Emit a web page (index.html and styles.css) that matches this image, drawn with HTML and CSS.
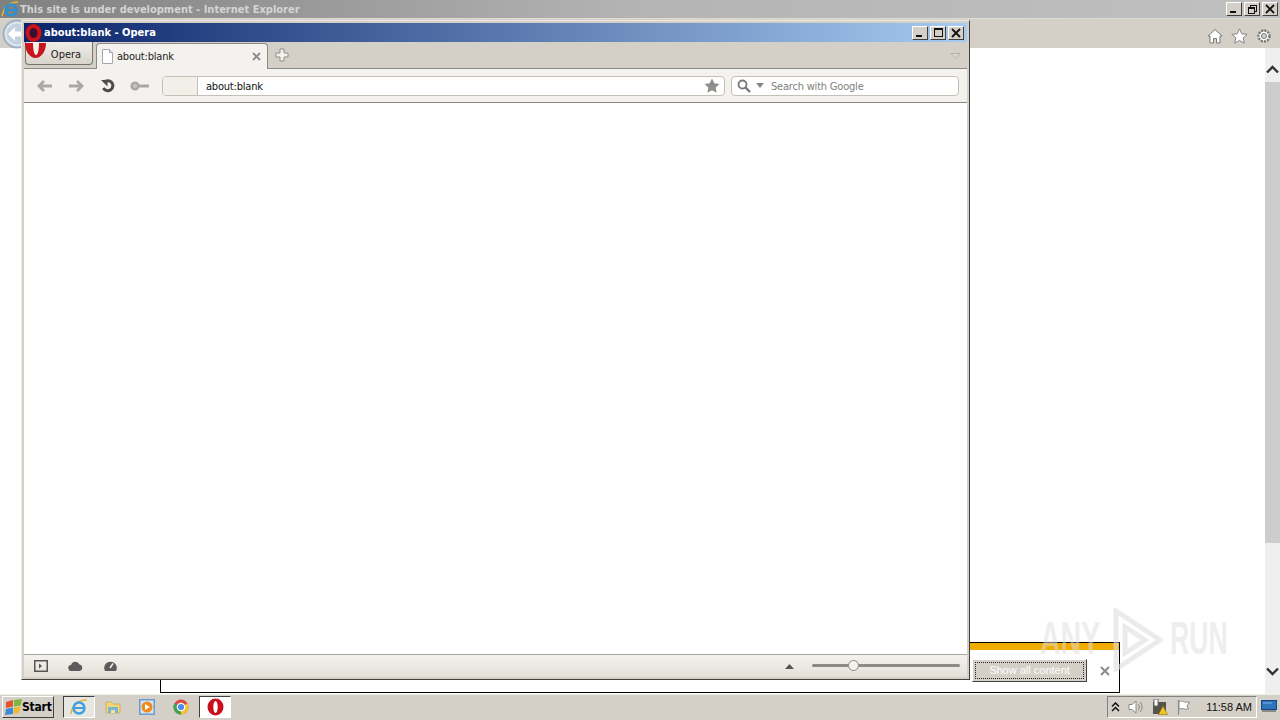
FILE: index.html
```html
<!DOCTYPE html>
<html lang="en">
<head>
    <meta charset="UTF-8">
    <title>about:blank - Opera</title>
    <link rel="stylesheet" href="styles.css">
</head>
<body>
<div class="desktop">
    <!-- IE window behind -->
    <div class="ie-window">
        <div class="ie-title">
            <svg class="ie-logo" width="18" height="17" viewBox="0 0 18 17"><path d="M1 15C3 6 9 1 17 1" fill="none" stroke="#e8b820" stroke-width="1.500"/><ellipse cx="10" cy="9" rx="5.500" ry="5.500" fill="none" stroke="#2b8fd8" stroke-width="2.400"/><path d="M5 9h10" stroke="#2b8fd8" stroke-width="2"/></svg>
            <span class="ie-title-text">This site is under development - Internet Explorer</span>
            <div class="win-btns ie-btns">
                <span class="win-btn"><i class="glyph-min"></i></span>
                <span class="win-btn"><i class="glyph-restore"></i></span>
                <span class="win-btn"><svg width="10" height="10" viewBox="0 0 10 10"><path d="M1 1l8 8M9 1l-8 8" stroke="#111" stroke-width="1.800"/></svg></span>
            </div>
        </div>
        <div class="ie-toolbar">
            <svg class="ie-back" width="30" height="30" viewBox="0 0 30 30"><circle cx="15" cy="15" r="13.500" fill="#dfe7ef" stroke="#9fb0c2" stroke-width="2"/><circle cx="15" cy="15" r="10.500" fill="#c4d2e0"/><path d="M6 15l7-7v4.500h9v5h-9V22z" fill="#fff"/></svg>
            <div class="ie-tools">
                <svg width="16" height="16" viewBox="0 0 16 16"><path d="M1 8l7-6.500L15 8h-2v7H9.500v-4.500h-3V15H3V8z" fill="#fff" stroke="#77787a"/></svg>
                <svg width="17" height="16" viewBox="0 0 17 16"><path d="M8.500 .8l2.300 5 5.400.5-4.100 3.600 1.200 5.300-4.800-2.800-4.800 2.800 1.200-5.300L.8 6.300l5.400-.5z" fill="#fff" stroke="#85868a"/></svg>
                <svg width="16" height="16" viewBox="0 0 16 16"><circle cx="8" cy="8" r="5.500" fill="#fff" stroke="#77787a" stroke-width="2.400" stroke-dasharray="2.200 1"/><circle cx="8" cy="8" r="2.500" fill="#d4d0c8" stroke="#77787a"/></svg>
            </div>
        </div>
        <div class="ie-body">
            <div class="ie-page"></div>
            <div class="ie-scroll">
                <svg width="15" height="15" viewBox="0 0 15 15"><path d="M2 10.500l5.500-5.500 5.500 5.500" fill="none" stroke="#333" stroke-width="2.400"/></svg>
                <div class="ie-thumb"></div>
                <svg width="15" height="15" viewBox="0 0 15 15"><path d="M2 4.500l5.500 5.500 5.500-5.500" fill="none" stroke="#333" stroke-width="2.400"/></svg>
            </div>
        </div>
    </div>

    <!-- notification bar of IE, sticks out from under Opera -->
    <div class="notify">
        <div class="notify-stripe"></div>
        <div class="notify-row">
            <button class="notify-btn"><span>Show all content</span></button>
            <svg width="10" height="10" viewBox="0 0 10 10"><path d="M1 1l8 8M9 1l-8 8" stroke="#8a8a8a" stroke-width="2"/></svg>
        </div>
    </div>

    <!-- watermark -->
    <div class="watermark">
        <span class="wm-any">ANY</span>
        <svg width="50" height="64" viewBox="0 0 50 64"><path d="M3 3l44 29-44 29zM12 19v26l20-13z" fill="none" stroke="#dedede" stroke-opacity=".6" stroke-width="5"/></svg>
        <span class="wm-run">RUN</span>
    </div>

    <!-- Opera window -->
    <div class="op-window">
        <div class="op-title">
            <span class="op-title-text">about:blank - Opera</span>
            <div class="win-btns">
                <span class="win-btn"><i class="glyph-min"></i></span>
                <span class="win-btn"><i class="glyph-max"></i></span>
                <span class="win-btn"><svg width="10" height="10" viewBox="0 0 10 10"><path d="M1 1l8 8M9 1l-8 8" stroke="#111" stroke-width="1.800"/></svg></span>
            </div>
        </div>
        <div class="op-tabs">
            <button class="op-menu">Opera</button>
            <div class="op-tab">
                <svg width="13" height="15" viewBox="0 0 13 15"><path d="M1.500 .5h7l3 3v11h-10z" fill="#fff" stroke="#a4a8ac"/><path d="M8.500 .5v3h3" fill="#e4e4e4" stroke="#a4a8ac"/></svg>
                <span class="op-tab-label">about:blank</span>
                <svg width="9" height="9" viewBox="0 0 9 9"><path d="M1 1l7 7M8 1l-7 7" stroke="#8a8a8a" stroke-width="1.800"/></svg>
            </div>
            <svg class="op-newtab" width="14" height="14" viewBox="0 0 14 14"><path d="M5 1h4v4h4v4H9v4H5V9H1V5h4z" fill="#f4f2ee" stroke="#8f8d88"/></svg>
            <svg class="op-tabmenu" width="11" height="8" viewBox="0 0 11 8"><path d="M1 1.500h9L5.500 6.500z" fill="#dcd8d0" stroke="#b4b0a8"/></svg>
        </div>
        <div class="op-toolbar">
            <div class="op-navs">
                <svg width="16" height="12" viewBox="0 0 16 12"><path d="M7 1L2 6l5 5M2 6h13" fill="none" stroke="#aaa8a4" stroke-width="2.800"/></svg>
                <svg width="16" height="12" viewBox="0 0 16 12"><path d="M9 1l5 5-5 5M14 6H1" fill="none" stroke="#aaa8a4" stroke-width="2.800"/></svg>
                <svg class="op-reload" width="16" height="14" viewBox="0 0 16 14"><path d="M4 3.500a5 5 0 1 1-.600 5.500" fill="none" stroke="#4c4c4c" stroke-width="3"/><path d="M1 1h6.500v6.500z" fill="#4c4c4c"/></svg>
                <svg class="op-key" width="20" height="10" viewBox="0 0 20 10"><circle cx="5" cy="5" r="3.300" fill="#c8c6c0" stroke="#aaa8a4" stroke-width="2.600"/><path d="M8 3.500h11v3H8z" fill="#aaa8a4"/></svg>
            </div>
            <div class="op-address">
                <div class="op-badge"></div>
                <span class="op-url">about:blank</span>
                <svg width="16" height="15" viewBox="0 0 16 15"><path d="M8 .5l2.300 4.800 5.200.7-3.800 3.600.9 5.200L8 12.300l-4.600 2.500.9-5.200L.5 6l5.200-.7z" fill="#8e8e8c"/></svg>
            </div>
            <div class="op-search">
                <svg width="14" height="14" viewBox="0 0 14 14"><circle cx="5.500" cy="5.500" r="4" fill="none" stroke="#777" stroke-width="1.800"/><path d="M8.500 8.500l4.500 4.500" stroke="#777" stroke-width="2.400"/></svg>
                <svg width="8" height="5" viewBox="0 0 8 5"><path d="M0 0h8L4 5z" fill="#888"/></svg>
                <span class="op-search-text">Search with Google</span>
            </div>
        </div>
        <div class="op-page"></div>
        <div class="op-status">
            <svg width="14" height="12" viewBox="0 0 14 12"><rect x=".75" y=".75" width="12.500" height="10.500" fill="none" stroke="#555" stroke-width="1.500"/><path d="M5 3.500l3 2.500-3 2.500z" fill="#555"/></svg>
            <svg width="15" height="10" viewBox="0 0 15 10"><path d="M3.500 10a3 3 0 0 1-.500-6 4.500 4.500 0 0 1 8.500-.500 3.300 3.300 0 0 1 0 6.500z" fill="#5c5c5c"/></svg>
            <svg width="15" height="12" viewBox="0 0 15 12"><path d="M2 11a6.300 6.300 0 1 1 11 0z" fill="#5c5c5c"/><path d="M7 8l3-4.500" stroke="#f0ede8" stroke-width="1.600"/></svg>
            <svg class="op-zoom-arrow" width="9" height="5" viewBox="0 0 9 5"><path d="M4.500 0L9 5H0z" fill="#555"/></svg>
            <div class="op-slider">
                <div class="op-slider-track"></div>
                <div class="op-slider-knob"></div>
            </div>
        </div>
    </div>

    <!-- taskbar -->
    <div class="taskbar">
        <button class="start">
            <svg width="17" height="16" viewBox="0 0 17 16"><path d="M1 3l7-2v6.500L1 9z" fill="#e2552c"/><path d="M9 1l8-1-1.500 6.500L9 7.500z" fill="#7db63c"/><path d="M1 10l7-1.500V15l-8 1z" fill="#3b8ad8"/><path d="M9 8.500l6.500-1-1.500 6.500-5 1z" fill="#f0bb2c"/></svg>
            Start
        </button>
        <div class="task-btn sunken">
            <svg width="18" height="18" viewBox="0 0 18 18"><path d="M1 16C2 7 9 1 17 2" fill="none" stroke="#e2b62c" stroke-width="1.500"/><circle cx="9" cy="10" r="5.500" fill="none" stroke="#3f9fe0" stroke-width="2.400"/><path d="M4 10h10" stroke="#3f9fe0" stroke-width="2"/></svg>
        </div>
        <div class="task-btn">
            <svg width="16" height="15" viewBox="0 0 16 15"><path d="M1 3h5l2 2h7v9H1z" fill="#f1d47c" stroke="#c8a850" stroke-width=".8"/><path d="M3 8h10v6H3z" fill="#7cb4cc"/><path d="M6 14v-3h4v3z" fill="#f1e2a4"/></svg>
        </div>
        <div class="task-btn">
            <svg width="16" height="16" viewBox="0 0 16 16"><rect x=".75" y=".75" width="14.500" height="14.500" fill="#d6e4f2" stroke="#6a9ccc" stroke-width="1.500"/><circle cx="8" cy="8" r="5.500" fill="#f08a1c"/><path d="M6 5l5 3-5 3z" fill="#fff"/></svg>
        </div>
        <div class="task-btn">
            <svg width="16" height="16" viewBox="0 0 16 16"><circle cx="8" cy="8" r="7.500" fill="#dd4b3e"/><path d="M8 8L14.500 4.250A7.500 7.500 0 0 1 8 15.500z" fill="#f4c430"/><path d="M8 8L8 15.500A7.500 7.500 0 0 1 1.500 4.250z" fill="#3fa456"/><circle cx="8" cy="8" r="3.700" fill="#4a8af4" stroke="#fff" stroke-width="1.200"/></svg>
        </div>
        <div class="task-btn opera-task">
            <svg width="17" height="18" viewBox="0 0 17 18"><ellipse cx="8.500" cy="9" rx="8" ry="8.500" fill="#c9101a"/><ellipse cx="8.500" cy="9" rx="2.200" ry="6" fill="#fff"/></svg>
        </div>
        <div class="tray">
            <svg width="9" height="10" viewBox="0 0 9 10"><path d="M1 4.500l3.500-3.500L8 4.500M1 9l3.500-3.500L8 9" fill="none" stroke="#111" stroke-width="1.500"/></svg>
            <svg width="16" height="16" viewBox="0 0 16 16"><path d="M1 5.500h3L8 2v12L4 10.500H1z" fill="#fff" stroke="#8a8a86"/><path d="M10 5a4 4 0 0 1 0 6M12 3a7 7 0 0 1 0 10" fill="none" stroke="#8a8a86"/></svg>
            <svg width="16" height="16" viewBox="0 0 16 16"><rect x="1" y="3" width="13" height="12" fill="#55534a"/><rect x="2" y="0" width="4" height="7" fill="#fff" stroke="#666"/><path d="M11 7l4.500 8.500h-9z" fill="#f2c81c" stroke="#8a6c10" stroke-width=".6"/></svg>
            <svg width="16" height="16" viewBox="0 0 16 16"><path d="M2.500 1v15" stroke="#8a8a86" stroke-width="1.200"/><path d="M3 2.500c4-1.500 4 1.500 10.500 .5l-2.500 4 1.500 3c-5 1-6-1.500-9.500 0z" fill="#fff" stroke="#8a8a86"/></svg>
            <span class="clock">11:58 AM</span>
        </div>
        <svg class="show-desktop" width="16" height="13" viewBox="0 0 16 13"><rect x=".5" y=".5" width="15" height="9" fill="#2c74bc" stroke="#16467c"/><path d="M2 3h9" stroke="#7cb4e4"/><rect x="1" y="10" width="14" height="2" fill="#8a8a86"/></svg>
    </div>

    <!-- Opera logo badge, over the title bar and the menu button -->
    <svg class="op-logo" width="17" height="18" viewBox="0 0 17 18"><ellipse cx="8.500" cy="9" rx="6" ry="7" fill="#3a1030" stroke="#cf1119" stroke-width="4"/></svg>
    <svg class="op-logo-big" width="21" height="16" viewBox="0 0 21 16"><path d="M0 0h21c0 8-4.500 15-10.500 15S0 8 0 0z" fill="#c8141c"/><path d="M8 0h6c0 6-1 12-3 12S8 6 8 0z" fill="#f4f0ea"/></svg>
</div>
</body>
</html>
```

FILE: styles.css
```css
html, body {
    margin: 0;
    padding: 0;
}
body {
    width: 1280px;
    height: 720px;
    overflow: hidden;
    font-family: "Liberation Sans", Arial, sans-serif;
    font-size: 11px;
}
.desktop {
    position: relative;
    width: 1280px;
    height: 720px;
    background: #fff;
    overflow: hidden;
}

/* IE window */
.ie-window {
    position: absolute;
    left: 0;
    top: 0;
    width: 1280px;
    height: 694px;
    display: flex;
    flex-direction: column;
}
.ie-title {
    height: 18px;
    flex: none;
    display: flex;
    align-items: center;
    background: linear-gradient(to right, #808080, #b4b4b4 50%, #c0c0c0);
    padding-left: 1px;
}
.ie-title-text {
    font-family: "DejaVu Sans Condensed", "DejaVu Sans", sans-serif;
    font-size: 11px;
    font-weight: bold;
    color: #d4d4d4;
    margin-left: 1px;
}
.ie-btns {
    margin-left: auto;
    margin-right: 2px;
}
.ie-toolbar {
    height: 30px;
    flex: none;
    display: flex;
    align-items: center;
    background: #d4d0c8;
    border-top: 1px solid #e0dcd4;
    box-sizing: border-box;
}
.ie-back {
    margin-left: 2px;
}
.ie-tools {
    margin-left: auto;
    margin-right: 8px;
    display: flex;
    gap: 8px;
    padding-top: 4px;
}
.ie-body {
    flex: 1;
    display: flex;
}
.ie-page {
    flex: 1;
}
.ie-scroll {
    width: 15px;
    background: #efefef;
    display: flex;
    flex-direction: column;
    align-items: center;
    padding-top: 14px;
    padding-bottom: 15px;
}
.ie-thumb {
    width: 15px;
    height: 461px;
    background: #cdcdcd;
    margin-top: 5px;
    margin-bottom: auto;
}

/* shared window buttons */
.win-btns {
    display: flex;
    gap: 2px;
}
.win-btn {
    width: 14px;
    height: 12px;
    background: #d4d0c8;
    border: 1px solid;
    border-color: #fff #404040 #404040 #fff;
    display: flex;
    align-items: center;
    justify-content: center;
    position: relative;
}
.glyph-min {
    width: 6px;
    height: 2px;
    background: #111;
    margin-top: 6px;
    margin-right: 3px;
}
.glyph-max {
    width: 7px;
    height: 6px;
    border: 1px solid #111;
    border-top-width: 2px;
}
.glyph-restore {
    width: 5px;
    height: 4px;
    border: 1px solid #111;
    border-top-width: 2px;
    box-shadow: 2px -2px 0 -1px #d4d0c8, 2px -2px 0 0 #111;
    margin-top: 2px;
    margin-right: 2px;
}

/* IE notification */
.notify {
    position: absolute;
    left: 160px;
    top: 642px;
    width: 958px;
    height: 49px;
    border: 1px solid #000;
    background: #fff;
}
.notify-stripe {
    height: 7px;
    background: #f0ac00;
}
.notify-row {
    display: flex;
    align-items: center;
    justify-content: flex-end;
    gap: 13px;
    padding: 9px 9px 0 0;
}
.notify-btn {
    width: 115px;
    height: 23px;
    padding: 2px;
    background: #d4d0c8;
    border: 1px solid;
    border-color: #fff #404040 #404040 #fff;
    font-family: "Liberation Sans", Arial, sans-serif;
    font-size: 11px;
    color: #fff;
}
.notify-btn span {
    display: block;
    height: 100%;
    line-height: 15px;
    box-sizing: border-box;
    border: 1px dotted #222;
}

.watermark {
    position: absolute;
    left: 1040px;
    top: 608px;
    display: flex;
    align-items: center;
    font-family: "Liberation Sans", Arial, sans-serif;
    font-size: 46px;
    font-weight: bold;
    color: rgba(222, 222, 222, 0.5);
}
.watermark span {
    transform-origin: left center;
    margin-top: -5px;
}
.wm-any {
    transform: scaleX(.62);
    margin-right: -24px;
}
.wm-run {
    transform: scaleX(.58);
    margin-left: 7px;
    margin-right: -40px;
}

/* Opera window */
.op-window {
    position: absolute;
    left: 21px;
    top: 20px;
    width: 949px;
    height: 660px;
    box-sizing: border-box;
    background: #d4d0c8;
    border: 1px solid;
    border-color: #ece9e2 #404040 #404040 #ece9e2;
    padding: 2px 0 2px 2px;
    display: flex;
    flex-direction: column;
}
.op-title {
    height: 19px;
    flex: none;
    display: flex;
    align-items: center;
    margin-right: 2px;
    background: linear-gradient(to right, #0a246a, #a6caf0);
    padding: 0 3px 0 20px;
}
.op-title-text {
    font-family: "DejaVu Sans Condensed", "DejaVu Sans", sans-serif;
    font-size: 11px;
    font-weight: bold;
    color: #fff;
}
.op-title .win-btns {
    margin-left: auto;
}
.op-tabs {
    height: 26px;
    flex: none;
    position: relative;
    display: flex;
    align-items: flex-end;
    background: #d4d0c8;
    border-bottom: 1px solid #8c8a84;
    margin-right: 2px;
}
.op-menu {
    width: 68px;
    height: 23px;
    margin: 0 3px 3px 1px;
    padding: 2px 0 0 14px;
    background: linear-gradient(#f0ede8, #d8d4cc);
    border: 1px solid #77756f;
    border-radius: 0 0 4px 4px;
    border-top: none;
    font-family: "DejaVu Sans Condensed", "DejaVu Sans", sans-serif;
    font-size: 11px;
    color: #222;
}
.op-tab {
    width: 172px;
    height: 26px;
    box-sizing: border-box;
    background: #f4f2ee;
    border: 1px solid #8c8a84;
    border-bottom: none;
    border-radius: 4px 4px 0 0;
    display: flex;
    align-items: center;
    padding: 0 6px 1px 4px;
    margin-bottom: -1px;
}
.op-tab-label {
    font-family: "DejaVu Sans Condensed", "DejaVu Sans", sans-serif;
    font-size: 11px;
    letter-spacing: -.2px;
    color: #222;
    margin-left: 3px;
    flex: 1;
}
.op-newtab {
    margin: 0 0 6px 7px;
}
.op-tabmenu {
    margin: 0 6px 8px auto;
}
.op-toolbar {
    height: 33px;
    flex: none;
    display: flex;
    align-items: center;
    background: #f4f2ee;
    border-bottom: 1px solid #8c8a84;
    margin-right: 2px;
}
.op-navs {
    width: 138px;
    flex: none;
    display: flex;
    align-items: center;
    gap: 15px;
    padding-left: 13px;
    box-sizing: border-box;
}
.op-reload {
    margin-left: 1px;
}
.op-key {
    margin-left: -1px;
}
.op-address {
    width: 563px;
    height: 20px;
    box-sizing: border-box;
    display: flex;
    align-items: center;
    background: #fff;
    border: 1px solid #c4c0b8;
    border-radius: 4px;
    padding-right: 4px;
}
.op-badge {
    width: 34px;
    height: 100%;
    background: #f2efe9;
    border-right: 1px solid #c4c0b8;
    border-radius: 3px 0 0 3px;
    flex: none;
}
.op-url {
    flex: 1;
    font-family: "DejaVu Sans Condensed", "DejaVu Sans", sans-serif;
    font-size: 11px;
    letter-spacing: -.2px;
    color: #111;
    padding: 1px 0 0 8px;
}
.op-search {
    width: 228px;
    height: 20px;
    box-sizing: border-box;
    margin-left: 6px;
    display: flex;
    align-items: center;
    gap: 5px;
    background: #fff;
    border: 1px solid #c4c0b8;
    border-radius: 4px;
    padding-left: 5px;
}
.op-search-text {
    font-family: "DejaVu Sans Condensed", "DejaVu Sans", sans-serif;
    font-size: 11px;
    letter-spacing: -.2px;
    color: #80807c;
    margin-left: 2px;
    padding-top: 1px;
}
.op-page {
    flex: 1;
    background: #fff;
    margin-right: 2px;
}
.op-status {
    height: 23px;
    flex: none;
    display: flex;
    align-items: center;
    gap: 20px;
    padding-left: 10px;
    background: linear-gradient(#f4f2ee, #e4e0d8);
    border-top: 1px solid #a8a6a0;
    box-sizing: border-box;
    margin-right: 2px;
}
.op-zoom-arrow {
    margin-left: auto;
    margin-right: -2px;
}
.op-slider {
    width: 148px;
    height: 12px;
    position: relative;
    margin-right: 7px;
}
.op-slider-track {
    margin-top: 4px;
    height: 3px;
    background: #8c8a84;
    border-radius: 2px;
}
.op-slider-knob {
    position: absolute;
    left: 36px;
    top: 0;
    width: 9px;
    height: 9px;
    background: #f4f2ee;
    border: 1px solid #8c8a84;
    border-radius: 50%;
}

/* taskbar */
.taskbar {
    position: absolute;
    left: 0;
    top: 694px;
    width: 1280px;
    height: 26px;
    box-sizing: border-box;
    background: #d4d0c8;
    border-top: 1px solid #f0eee8;
    display: flex;
    align-items: center;
    padding: 0 0 2px 2px;
}
.start {
    width: 52px;
    height: 22px;
    margin-right: 9px;
    padding: 0 0 0 2px;
    display: flex;
    align-items: center;
    gap: 0;
    background: #d4d0c8;
    border: 1px solid;
    border-color: #fff #404040 #404040 #fff;
    font-family: "DejaVu Sans Condensed", "DejaVu Sans", sans-serif;
    font-size: 12px;
    font-weight: bold;
    letter-spacing: -.2px;
    color: #000;
}
.task-btn {
    width: 32px;
    height: 22px;
    margin-right: 2px;
    box-sizing: border-box;
    display: flex;
    align-items: center;
    justify-content: center;
}
.sunken {
    border: 1px solid;
    border-color: #404040 #fff #fff #404040;
    background: #e8e6e0;
}
.opera-task {
    background: #fff;
    border: 1px solid;
    border-color: #404040 #fff #fff #404040;
}
.tray {
    margin-left: auto;
    height: 22px;
    box-sizing: border-box;
    border: 1px solid;
    border-color: #808080 #fff #fff #808080;
    display: flex;
    align-items: center;
    gap: 8px;
    padding: 0 4px 0 3px;
}
.clock {
    font-family: "Liberation Sans", Arial, sans-serif;
    font-size: 11px;
    color: #111;
    margin-left: 6px;
}
.show-desktop {
    margin: 0 3px 0 4px;
}

.op-logo {
    position: absolute;
    left: 25px;
    top: 24px;
}
.op-logo-big {
    position: absolute;
    left: 25px;
    top: 43px;
}
```
